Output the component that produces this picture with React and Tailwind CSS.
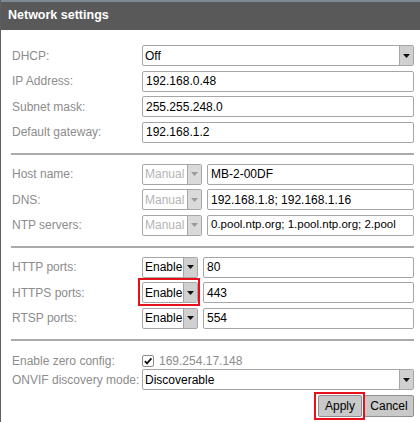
import React from "react";

function Caret({ disabled }) {
  return (
    <svg width="7" height="4" viewBox="0 0 7 4">
      <path d="M0 0H7L3.5 4Z" fill={disabled ? "#9a9a9a" : "#111"} />
    </svg>
  );
}

function Select({ value, cls, disabled, outline }) {
  return (
    <div
      className={
        "relative flex h-[21px] rounded-[2px] border border-[#a6a6a6] bg-white " + cls
      }
    >
      <div
        className={
          "flex flex-1 items-center overflow-hidden whitespace-nowrap pl-[2px] " +
          (disabled ? "text-[#b4b4b4]" : "text-black")
        }
      >
        {value}
      </div>
      <div
        className={
          "flex w-[14px] items-center justify-center border-l border-[#a6a6a6] " +
          (disabled ? "bg-[#dadada]" : "bg-[#d0d0d0]")
        }
      >
        <Caret disabled={disabled} />
      </div>
      {outline && (
        <div className="pointer-events-none absolute -top-[5px] -left-[5px] -right-[3px] -bottom-[4px] border-2 border-[#e8101a]" />
      )}
    </div>
  );
}

function Input({ value }) {
  return (
    <div className="flex h-[21px] min-w-0 flex-1 items-center overflow-hidden whitespace-nowrap rounded-[2px] border border-[#a6a6a6] bg-white pl-[3px] text-black">
      {value}
    </div>
  );
}

function Label({ children }) {
  return <div className="w-[131px] shrink-0 pl-[1px] text-[#8c8c8c]">{children}</div>;
}

function Sep({ cls }) {
  return <div className={"h-[2px] bg-[#ababab] " + cls} />;
}

export default function App() {
  return (
    <div className="h-[422px] w-[420px] overflow-hidden border-l border-[#5e5e5e] bg-white font-['Liberation_Sans',Arial,sans-serif] text-[12px] leading-none">
      <div className="flex h-[30px] items-center border-t-2 border-[#7d8a94] bg-[#595959] pb-[1px] pl-[7px] text-[12.5px] font-bold text-white">
        Network settings
      </div>
      <div className="flex flex-col pl-[10px] pr-[6px]">
        <div className="mt-[15px] flex h-[21px] items-center">
          <Label>DHCP:</Label>
          <Select value="Off" cls="flex-1" />
        </div>
        <div className="mt-[4.5px] flex h-[21px] items-center">
          <Label>IP Address:</Label>
          <Input value="192.168.0.48" />
        </div>
        <div className="mt-[4.5px] flex h-[21px] items-center">
          <Label>Subnet mask:</Label>
          <Input value="255.255.248.0" />
        </div>
        <div className="mt-[4.5px] flex h-[21px] items-center">
          <Label>Default gateway:</Label>
          <Input value="192.168.1.2" />
        </div>

        <Sep cls="mt-[10px]" />

        <div className="mt-[9px] flex h-[21px] items-center">
          <Label>Host name:</Label>
          <Select value="Manual" cls="w-[60px]" disabled />
          <div className="w-[5px]" />
          <Input value="MB-2-00DF" />
        </div>
        <div className="mt-[4.5px] flex h-[21px] items-center">
          <Label>DNS:</Label>
          <Select value="Manual" cls="w-[60px]" disabled />
          <div className="w-[5px]" />
          <Input value="192.168.1.8; 192.168.1.16" />
        </div>
        <div className="mt-[4.5px] flex h-[21px] items-center">
          <Label>NTP servers:</Label>
          <Select value="Manual" cls="w-[60px]" disabled />
          <div className="w-[5px]" />
          <div className="flex h-[21px] min-w-0 flex-1 items-center overflow-hidden whitespace-nowrap rounded-[2px] border border-[#a6a6a6] bg-white pl-[3px] text-[11.5px] text-black">
            0.pool.ntp.org; 1.pool.ntp.org; 2.pool
          </div>
        </div>

        <Sep cls="mt-[10.5px]" />

        <div className="mt-[8.5px] flex h-[21px] items-center">
          <Label>HTTP ports:</Label>
          <Select value="Enable" cls="w-[56px]" />
          <div className="w-[5px]" />
          <Input value="80" />
        </div>
        <div className="mt-[4.5px] flex h-[21px] items-center">
          <Label>HTTPS ports:</Label>
          <Select value="Enable" cls="w-[56px]" outline />
          <div className="w-[5px]" />
          <Input value="443" />
        </div>
        <div className="mt-[4.5px] flex h-[21px] items-center">
          <Label>RTSP ports:</Label>
          <Select value="Enable" cls="w-[56px]" />
          <div className="w-[5px]" />
          <Input value="554" />
        </div>

        <Sep cls="mt-[10.5px]" />

        <div className="mt-[12px] flex h-[16px] items-center">
          <Label>Enable zero config:</Label>
          <div className="flex h-[12px] w-[12px] items-center justify-center rounded-[2px] border border-[#8a8a8a] bg-white">
            <svg width="10" height="10" viewBox="0 0 10 10">
              <path d="M1.8 5.2L4 7.4L8.4 2.4" fill="none" stroke="#111" strokeWidth="1.7" />
            </svg>
          </div>
          <div className="ml-[5px] text-[#8c8c8c]">169.254.17.148</div>
        </div>
        <div className="flex h-[21px] items-center">
          <Label>ONVIF discovery mode:</Label>
          <Select value="Discoverable" cls="flex-1" />
        </div>

        <div className="mt-[5px] flex justify-end gap-[2px]">
          <div className="relative flex h-[22px] w-[44px] items-center justify-center rounded-[2px] border border-[#8f8f8f] bg-[#c9c9c9] text-black">
            Apply
            <div className="pointer-events-none absolute -top-[4px] -left-[5px] -right-[4px] -bottom-[4px] border-2 border-[#e8101a]" />
          </div>
          <div className="flex h-[22px] w-[50px] items-center justify-center rounded-[2px] border border-[#8f8f8f] bg-[#c9c9c9] text-black">
            Cancel
          </div>
        </div>
      </div>
    </div>
  );
}
